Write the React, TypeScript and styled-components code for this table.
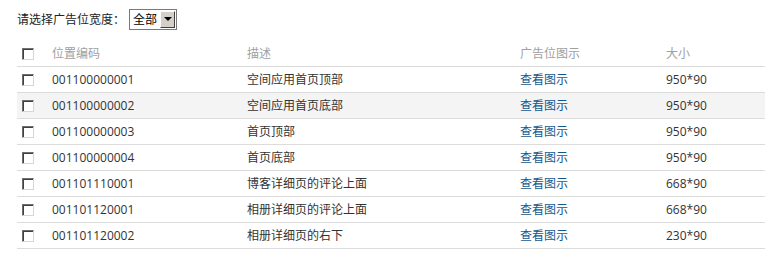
import React from 'react'
import styled, { createGlobalStyle } from 'styled-components'

interface Slot {
  code: string
  desc: string
  size: string
}

const slots: Slot[] = [
  { code: '001100000001', desc: '空间应用首页顶部', size: '950*90' },
  { code: '001100000002', desc: '空间应用首页底部', size: '950*90' },
  { code: '001100000003', desc: '首页顶部', size: '950*90' },
  { code: '001100000004', desc: '首页底部', size: '950*90' },
  { code: '001101110001', desc: '博客详细页的评论上面', size: '668*90' },
  { code: '001101120001', desc: '相册详细页的评论上面', size: '668*90' },
  { code: '001101120002', desc: '相册详细页的右下', size: '230*90' },
]

const GlobalStyle = createGlobalStyle`
  body {
    margin: 0;
    background: #fff;
    font-family: 'Open Sans', 'Noto Sans CJK SC', sans-serif;
    font-size: 12px;
    color: #333;
  }
`

const App: React.FC = () => {
  return (
    <>
      <GlobalStyle />
      <StyledPage>
        <StyledFilter>
          <StyledLabel>请选择广告位宽度：</StyledLabel>
          <StyledSelect>
            <StyledSelectValue>全部</StyledSelectValue>
            <StyledSelectButton>
              <StyledArrow />
            </StyledSelectButton>
          </StyledSelect>
        </StyledFilter>

        <StyledTable>
          <StyledRow header>
            <StyledCheckCell>
              <StyledCheckbox />
            </StyledCheckCell>
            <StyledCell>位置编码</StyledCell>
            <StyledCell>描述</StyledCell>
            <StyledCell>广告位图示</StyledCell>
            <StyledCell>大小</StyledCell>
          </StyledRow>
          {slots.map((slot, i) => (
            <StyledRow key={slot.code} highlight={i === 1}>
              <StyledCheckCell>
                <StyledCheckbox />
              </StyledCheckCell>
              <StyledCell>{slot.code}</StyledCell>
              <StyledCell>{slot.desc}</StyledCell>
              <StyledCell>
                <StyledLink href="#">查看图示</StyledLink>
              </StyledCell>
              <StyledCell>{slot.size}</StyledCell>
            </StyledRow>
          ))}
        </StyledTable>
      </StyledPage>
    </>
  )
}

const StyledPage = styled.div`
  padding: 8px 0 0 17px;
  width: 748px;
`

const StyledFilter = styled.div`
  display: flex;
  align-items: center;
  height: 22px;
`

const StyledLabel = styled.span`
  color: #222;
  font-size: 12px;
  margin-right: 4px;
`

const StyledSelect = styled.div`
  display: flex;
  align-items: stretch;
  height: 21px;
  width: 48px;
  box-sizing: border-box;
  border: 1px solid #7a7a7a;
  background: #fff;
`

const StyledSelectValue = styled.span`
  flex: 1;
  display: flex;
  align-items: center;
  padding-left: 3px;
  color: #000;
`

const StyledSelectButton = styled.span`
  width: 15px;
  margin: 1px;
  display: flex;
  align-items: center;
  justify-content: center;
  background: #d4d0c8;
  border-top: 1px solid #fff;
  border-left: 1px solid #fff;
  border-right: 1px solid #404040;
  border-bottom: 1px solid #404040;
  box-sizing: border-box;
`

const StyledArrow = styled.span`
  width: 0;
  height: 0;
  border-left: 4px solid transparent;
  border-right: 4px solid transparent;
  border-top: 4px solid #000;
`

const StyledTable = styled.div`
  margin-top: 11px;
`

const StyledRow = styled.div<{ header?: boolean; highlight?: boolean }>`
  display: grid;
  grid-template-columns: 35px 195px 273px 146px 1fr;
  align-items: center;
  height: 26px;
  box-sizing: border-box;
  border-bottom: 1px solid #dcdcdc;
  background: ${(props) => (props.highlight ? '#f4f4f4' : '#fff')};
  color: ${(props) => (props.header ? '#a0a0a0' : '#333')};
`

const StyledCheckCell = styled.div`
  display: flex;
  align-items: center;
  padding-left: 5px;
`

const StyledCell = styled.div`
  white-space: nowrap;
  line-height: 16px;
`

const StyledCheckbox = styled.span`
  display: block;
  width: 12px;
  height: 12px;
  box-sizing: border-box;
  background: #fff;
  border-top: 1px solid #6f6f6f;
  border-left: 1px solid #6f6f6f;
  border-right: 1px solid #d6d6d6;
  border-bottom: 1px solid #d6d6d6;
  box-shadow: inset 1px 1px 0 #404040;
`

const StyledLink = styled.a`
  color: #16578a;
  text-decoration: none;
`

export default App
